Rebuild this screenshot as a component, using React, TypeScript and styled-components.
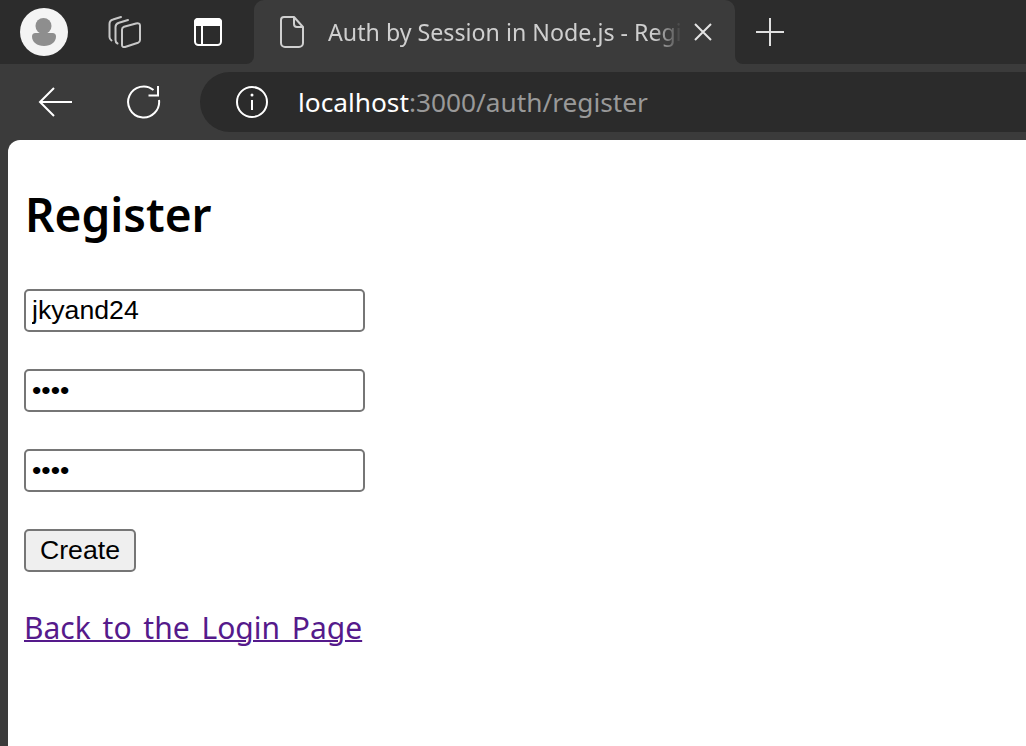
import styled, { createGlobalStyle } from 'styled-components';

const GlobalStyle = createGlobalStyle`
  html,
  body {
    margin: 0;
    height: 100%;
    overflow: hidden;
    background: #3b3b3b;
  }

  #root {
    height: 100%;
  }
`;

const Window = styled.div`
  display: flex;
  flex-direction: column;
  height: 100%;
  background: #3b3b3b;
  font-family: 'Noto Sans', 'Open Sans', sans-serif;
`;

const TabStrip = styled.div`
  display: flex;
  height: 64px;
  flex: none;
  background: linear-gradient(#2c2c2c 50%, #3b3b3b 50%);
`;

const LeftGroup = styled.div`
  display: flex;
  align-items: flex-start;
  width: 254px;
  padding: 8px 0 0 20px;
  box-sizing: border-box;
  flex: none;
  background: #2c2c2c;
  border-bottom-right-radius: 8px;
`;

const Avatar = styled.div`
  display: flex;
  width: 48px;
  height: 48px;
  flex: none;
  margin-right: 39px;
`;

const StripIcon = styled.div<{ $gap?: number }>`
  display: flex;
  height: 48px;
  align-items: center;
  margin-right: ${(p) => p.$gap ?? 0}px;
`;

const Tab = styled.div`
  display: flex;
  align-items: center;
  width: 481px;
  height: 64px;
  flex: none;
  box-sizing: border-box;
  padding: 0 23px 0 26px;
  background: #3b3b3b;
  border-radius: 10px 10px 0 0;
`;

const TabTitle = styled.div`
  flex: 1;
  min-width: 0;
  margin: 0 12px 0 24px;
  overflow: hidden;
  white-space: nowrap;
  color: #cfcfcf;
  font-size: 23.2px;
  line-height: 64px;
  mask-image: linear-gradient(to right, #000 92%, transparent 100%);
`;

const RightGroup = styled.div`
  display: flex;
  align-items: flex-start;
  flex: 1;
  padding: 18px 0 0 21px;
  background: #2c2c2c;
  border-bottom-left-radius: 8px;
`;

const Toolbar = styled.div`
  display: flex;
  align-items: center;
  height: 76px;
  flex: none;
  padding-left: 38px;
  box-sizing: border-box;
`;

const ToolButton = styled.div<{ $gap: number }>`
  display: flex;
  margin-right: ${(p) => p.$gap}px;
`;

const Omnibox = styled.div`
  display: flex;
  align-items: center;
  flex: 1;
  height: 60px;
  padding-left: 36px;
  background: #2b2b2b;
  border-radius: 30px 0 0 30px;
`;

const Url = styled.div`
  margin-left: 30px;
  font-size: 26.25px;
  color: #999;
  white-space: nowrap;

  strong {
    font-weight: 400;
    color: #fff;
  }
`;

const Page = styled.div`
  flex: 1;
  margin-left: 8px;
  padding: 1px 16px 0;
  background: #fff;
  border-top-left-radius: 12px;
`;

const Heading = styled.h1`
  margin: 43px 0 45px 1px;
  font-family: 'Noto Sans', 'Open Sans', sans-serif;
  font-size: 46px;
  line-height: 60px;
  font-weight: 600;
  color: #000;
`;

const Form = styled.form`
  display: flex;
  flex-direction: column;
  align-items: flex-start;
  gap: 37px;
`;

const Field = styled.input`
  width: 341px;
  height: 43px;
  box-sizing: border-box;
  padding: 0 6px;
  border: 2px solid #767676;
  border-radius: 5px;
  outline: none;
  background: #fff;
  color: #000;
  font-family: 'Liberation Sans', Arial, sans-serif;
  font-size: 26.67px;
`;

const Submit = styled.button`
  width: 112px;
  height: 43px;
  padding: 0;
  border: 2px solid #767676;
  border-radius: 5px;
  background: #efefef;
  color: #000;
  font-family: 'Liberation Sans', Arial, sans-serif;
  font-size: 26.67px;
`;

const BackLink = styled.a`
  display: inline-block;
  margin-top: 34px;
  color: #551a8b;
  font-size: 30px;
  line-height: 44px;
  word-spacing: 4px;
  text-decoration: underline;
  text-decoration-thickness: 2px;
`;

function PersonAvatar() {
  return (
    <svg width="48" height="48" viewBox="0 0 48 48">
      <circle cx="24" cy="24" r="24" fill="#f4f4f4" />
      <circle cx="23.500" cy="18" r="8" fill="#8e8e8e" />
      <path d="M12 28.500a3.500 3.500 0 0 1 3.500-3.500h17a3.500 3.500 0 0 1 3.500 3.500c0 5.500-5 9.500-12 9.500s-12-4-12-9.500z" fill="#8e8e8e" />
    </svg>
  );
}

function WorkspacesIcon() {
  return (
    <svg width="34" height="34" viewBox="0 0 34 34" fill="none" stroke="#c8c8c8" strokeWidth="2" strokeLinejoin="round" strokeLinecap="round">
      <path d="M14 2 6 4.500Q2.500 5.500 2.500 9v13q0 2 2 3.500" />
      <path d="M21 5l-9 2.800Q8.500 9 8.500 12v13q0 2.500 2 3.500" />
      <path d="M15 14.500a3 3 0 0 1 2-2.800l12-3.200q4-.8 4 2V25a3 3 0 0 1-2 2.800l-13 4.200q-3 .5-3-2z" />
    </svg>
  );
}

function SidebarIcon() {
  return (
    <svg width="28" height="28" viewBox="0 0 28 28" fill="none">
      <path d="M4 0h20a4 4 0 0 1 4 4v4H0V4a4 4 0 0 1 4-4z" fill="#fff" />
      <rect x="1" y="1" width="26" height="26" rx="3.500" stroke="#fff" strokeWidth="2" />
      <path d="M8 8v19" stroke="#fff" strokeWidth="2" />
    </svg>
  );
}

function DocumentIcon() {
  return (
    <svg width="24" height="32" viewBox="0 0 24 32" fill="none" stroke="#d0d0d0" strokeWidth="2" strokeLinejoin="round">
      <path d="M4 1h10l9 10v16a4 4 0 0 1-4 4H5a4 4 0 0 1-4-4V4a3 3 0 0 1 3-3z" />
      <path d="M14 1v7a3 3 0 0 0 3 3h6" />
    </svg>
  );
}

function CloseIcon() {
  return (
    <svg width="18" height="18" viewBox="0 0 18 18" stroke="#e4e4e4" strokeWidth="2">
      <path d="M1 1l16 16M17 1 1 17" />
    </svg>
  );
}

function PlusIcon() {
  return (
    <svg width="28" height="28" viewBox="0 0 28 28" stroke="#e0e0e0" strokeWidth="2">
      <path d="M14 0v28M0 14h28" />
    </svg>
  );
}

function BackIcon() {
  return (
    <svg width="34" height="30" viewBox="0 0 34 30" fill="none" stroke="#fff" strokeWidth="2">
      <path d="M34 15H2M16 1 2 15l14 14" />
    </svg>
  );
}

function ReloadIcon() {
  return (
    <svg width="34" height="34" viewBox="0 0 34 34" fill="none" stroke="#fff" strokeWidth="2">
      <path d="M32 15A15.500 15.500 0 1 1 26.500 5" />
      <path d="M31 1v9.500h-9.500" />
    </svg>
  );
}

function InfoIcon() {
  return (
    <svg width="32" height="32" viewBox="0 0 32 32" fill="none" stroke="#fff" strokeWidth="2">
      <circle cx="16" cy="16" r="15" />
      <path d="M16 14v10" />
      <circle cx="16" cy="9" r="1.500" fill="#fff" stroke="none" />
    </svg>
  );
}

export default function App() {
  return (
    <Window>
      <GlobalStyle />
      <TabStrip>
        <LeftGroup>
          <Avatar>
            <PersonAvatar />
          </Avatar>
          <StripIcon $gap={53}>
            <WorkspacesIcon />
          </StripIcon>
          <StripIcon>
            <SidebarIcon />
          </StripIcon>
        </LeftGroup>
        <Tab>
          <DocumentIcon />
          <TabTitle>Auth by Session in Node.js - Register</TabTitle>
          <CloseIcon />
        </Tab>
        <RightGroup>
          <PlusIcon />
        </RightGroup>
      </TabStrip>
      <Toolbar>
        <ToolButton $gap={55}>
          <BackIcon />
        </ToolButton>
        <ToolButton $gap={39}>
          <ReloadIcon />
        </ToolButton>
        <Omnibox>
          <InfoIcon />
          <Url>
            <strong>localhost</strong>:3000/auth/register
          </Url>
        </Omnibox>
      </Toolbar>
      <Page>
        <Heading>Register</Heading>
        <Form onSubmit={(e) => e.preventDefault()}>
          <Field type="text" defaultValue="jkyand24" />
          <Field type="password" defaultValue="1234" />
          <Field type="password" defaultValue="1234" />
          <Submit type="submit">Create</Submit>
        </Form>
        <BackLink href="#">Back to the Login Page</BackLink>
      </Page>
    </Window>
  );
}
